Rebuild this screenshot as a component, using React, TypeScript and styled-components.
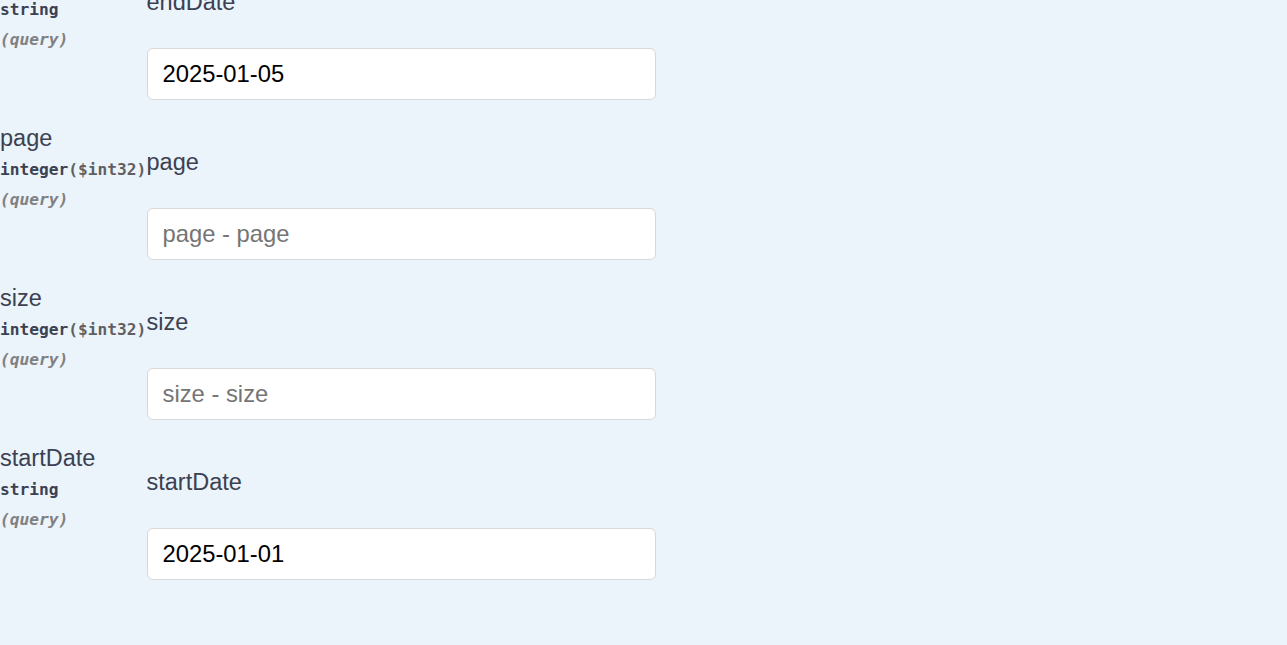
import styled, { createGlobalStyle } from "styled-components";

const GlobalStyle = createGlobalStyle`
  html, body {
    margin: 0;
    padding: 0;
    background: #ebf3fb;
    overflow: hidden;
  }
`;

type Param = {
  name: string;
  type: string;
  format?: string;
  value?: string;
};

const params: Param[] = [
  { name: "endDate", type: "string", value: "2025-01-05" },
  { name: "page", type: "integer", format: "$int32" },
  { name: "size", type: "integer", format: "$int32" },
  { name: "startDate", type: "string", value: "2025-01-01" },
];

const Page = styled.div`
  height: 645px;
  overflow: hidden;
  background: #ebf3fb;
  font-family: "Liberation Sans", Arial, sans-serif;
  color: #3b4151;
`;

// content is scrolled a little, the first row is cut at the top
const Table = styled.div`
  margin-top: -38px;
  display: flex;
  flex-direction: column;
`;

const Row = styled.div`
  display: grid;
  grid-template-columns: 146.5px 509px;
  align-items: start;
  padding-bottom: 22px;
`;

const NameCell = styled.div`
  display: flex;
  flex-direction: column;
`;

const Name = styled.div`
  font-size: 23.5px;
  line-height: 30px;
  padding-top: 1px;
`;

const Type = styled.div`
  font-family: "DejaVu Sans Mono", "Liberation Mono", monospace;
  font-size: 16.2px;
  font-weight: 700;
  line-height: 30px;
  padding-top: 2px;
  white-space: nowrap;
`;

const Format = styled.span`
  color: #606060;
`;

const In = styled.div`
  font-family: "DejaVu Sans Mono", "Liberation Mono", monospace;
  font-size: 16.2px;
  font-weight: 700;
  font-style: italic;
  line-height: 30px;
  color: #808080;
`;

const FieldCell = styled.div`
  display: flex;
  flex-direction: column;
  padding-top: 25px;
`;

const Label = styled.label`
  font-size: 23.5px;
  line-height: 30px;
  margin-bottom: 31px;
`;

const Input = styled.input`
  box-sizing: border-box;
  width: 509px;
  height: 52px;
  padding: 0 15px;
  border: 1px solid #d9d9d9;
  border-radius: 6px;
  background: #fff;
  font-family: "Liberation Sans", Arial, sans-serif;
  font-size: 23.8px;
  color: #000;
  outline: none;

  &::placeholder {
    color: #757575;
  }
`;

export default function App() {
  return (
    <Page>
      <GlobalStyle />
      <Table>
        {params.map((p) => (
          <Row key={p.name}>
            <NameCell>
              <Name>{p.name}</Name>
              <Type>
                {p.type}
                {p.format && <Format>({p.format})</Format>}
              </Type>
              <In>(query)</In>
            </NameCell>
            <FieldCell>
              <Label>{p.name}</Label>
              <Input
                type="text"
                defaultValue={p.value}
                placeholder={`${p.name} - ${p.name}`}
              />
            </FieldCell>
          </Row>
        ))}
      </Table>
    </Page>
  );
}
